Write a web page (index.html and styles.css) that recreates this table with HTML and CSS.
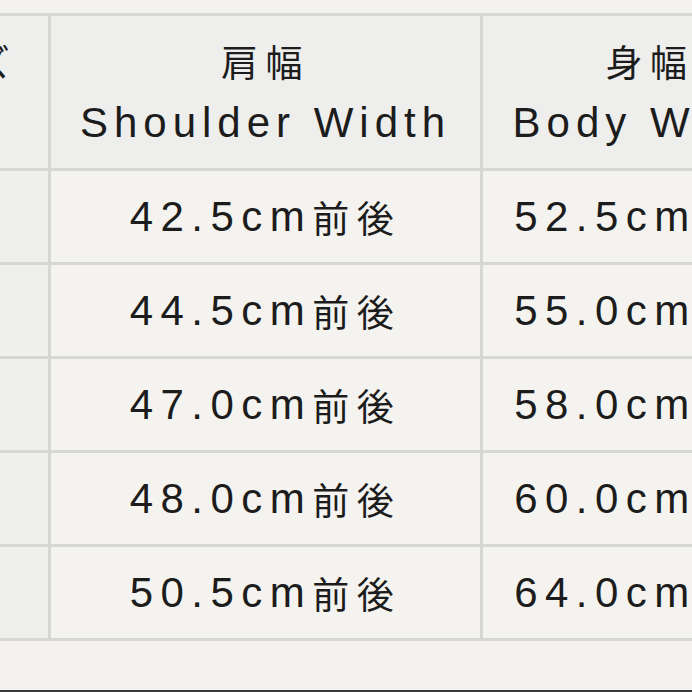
FILE: index.html
```html
<!DOCTYPE html>
<html lang="ja">
<head>
<meta charset="utf-8">
<link rel="stylesheet" href="styles.css">
</head>
<body>
<div class="page">
  <div class="sheet">
    <div class="cell head side"><div class="ja">サイズ</div><div>Size</div></div>
    <div class="cell head"><div class="ja">肩幅</div><div>Shoulder Width</div></div>
    <div class="cell head"><div class="ja">身幅</div><div>Body Width</div></div>

    <div class="cell side">S</div>
    <div class="cell">42.5cm<span class="ja">前後</span></div>
    <div class="cell">52.5cm<span class="ja">前後</span></div>

    <div class="cell side">M</div>
    <div class="cell">44.5cm<span class="ja">前後</span></div>
    <div class="cell">55.0cm<span class="ja">前後</span></div>

    <div class="cell side">L</div>
    <div class="cell">47.0cm<span class="ja">前後</span></div>
    <div class="cell">58.0cm<span class="ja">前後</span></div>

    <div class="cell side">XL</div>
    <div class="cell">48.0cm<span class="ja">前後</span></div>
    <div class="cell">60.0cm<span class="ja">前後</span></div>

    <div class="cell side">XXL</div>
    <div class="cell">50.5cm<span class="ja">前後</span></div>
    <div class="cell">64.0cm<span class="ja">前後</span></div>
  </div>
  <div class="edge"></div>
</div>
</body>
</html>
```

FILE: styles.css
```css
html, body {
  margin: 0;
  padding: 0;
  overflow: hidden;
  background: #f3f2ee;
}

.page {
  width: 692px;
  height: 692px;
  overflow: hidden;
  display: flex;
  flex-direction: column;
  padding-top: 13px;
  box-sizing: border-box;
}

.sheet {
  display: grid;
  grid-template-columns: 194px 429px 334px;
  grid-template-rows: 152px repeat(5, 91px);
  gap: 3px;
  padding: 3px;
  background: #d6d6d4;
  margin-left: -149px;
  width: max-content;
  font-family: "Liberation Sans", "Noto Sans CJK JP", sans-serif;
  font-size: 42px;
  letter-spacing: 7.5px;
  color: #1c1c1c;
}

.cell {
  background: #f4f3ef;
  display: flex;
  align-items: center;
  justify-content: center;
  white-space: nowrap;
}

.cell.head {
  background: #eeeeed;
  flex-direction: column;
  line-height: 61px;
  letter-spacing: 6px;
}

.cell.side {
  background: #efefee;
}

.ja {
  font-family: "Noto Sans CJK JP", sans-serif;
  font-size: 37px;
  letter-spacing: 7.5px;
}

.edge {
  margin-top: auto;
  height: 2px;
  background: #3a3a3a;
}
```
